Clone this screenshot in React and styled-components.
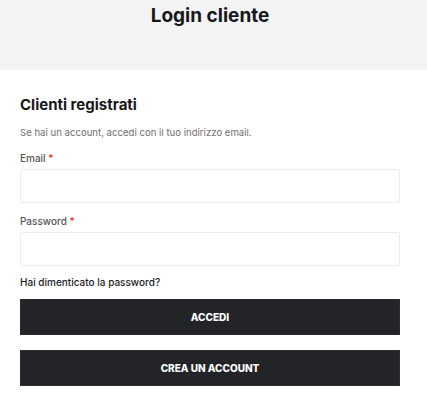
import React from 'react';
import styled, { createGlobalStyle } from 'styled-components';

const GlobalStyle = createGlobalStyle`
  body {
    margin: 0;
    background: #ffffff;
    font-family: Inter, "Noto Sans", sans-serif;
    color: #1b1c1f;
  }
  * {
    box-sizing: border-box;
  }
`;

const PageHeader = styled.header`
  height: 70px;
  background: #f3f3f3;
`;

const Inner = styled.div`
  width: 380px;
  margin-left: 20px;
`;

const Title = styled.h1`
  margin: 0;
  padding-top: 4px;
  font-size: 19px;
  line-height: 24px;
  font-weight: 700;
  text-align: center;
  color: #17181b;
`;

const Main = styled.main`
  padding-top: 24px;
`;

const H2 = styled.h2`
  margin: 0;
  font-size: 15px;
  line-height: 22px;
  font-weight: 700;
  color: #17181b;
`;

const Intro = styled.p`
  margin: 9px 0 0;
  font-size: 9.6px;
  line-height: 16px;
  color: #6f6f6f;
`;

const Field = styled.div`
  display: flex;
  flex-direction: column;
  margin-top: ${({ $gap }) => $gap}px;
`;

const Label = styled.label`
  font-size: 10px;
  line-height: 14px;
  font-weight: 500;
  color: #555555;
  margin-bottom: 4px;

  span {
    color: #e02b27;
  }
`;

const Input = styled.input`
  width: 100%;
  height: 34px;
  border: 1px solid #ececec;
  border-radius: 2px;
  background: #ffffff;
  outline: none;
`;

const Forgot = styled.a`
  display: block;
  margin-top: 9px;
  font-size: 10px;
  line-height: 14px;
  font-weight: 500;
  color: #1b1c1f;
  text-decoration: none;
`;

const Button = styled.button`
  display: block;
  width: 100%;
  height: 36px;
  margin-top: ${({ $gap }) => $gap}px;
  border: 1px solid #2c2d30;
  background: #232428;
  color: #ffffff;
  font-family: Inter, "Noto Sans", sans-serif;
  font-size: 10px;
  font-weight: 800;
  text-transform: uppercase;
  cursor: pointer;
`;

const App = () => (
  <>
    <GlobalStyle />
    <PageHeader>
      <Inner>
        <Title>Login cliente</Title>
      </Inner>
    </PageHeader>
    <Main>
      <Inner>
        <H2>Clienti registrati</H2>
        <Intro>Se hai un account, accedi con il tuo indirizzo email.</Intro>
        <Field $gap={10}>
          <Label>
            Email <span>*</span>
          </Label>
          <Input type="email" />
        </Field>
        <Field $gap={11}>
          <Label>
            Password <span>*</span>
          </Label>
          <Input type="password" />
        </Field>
        <Forgot href="#">Hai dimenticato la password?</Forgot>
        <Button $gap={10}>Accedi</Button>
        <Button $gap={15}>Crea un account</Button>
      </Inner>
    </Main>
  </>
);

export default App;
